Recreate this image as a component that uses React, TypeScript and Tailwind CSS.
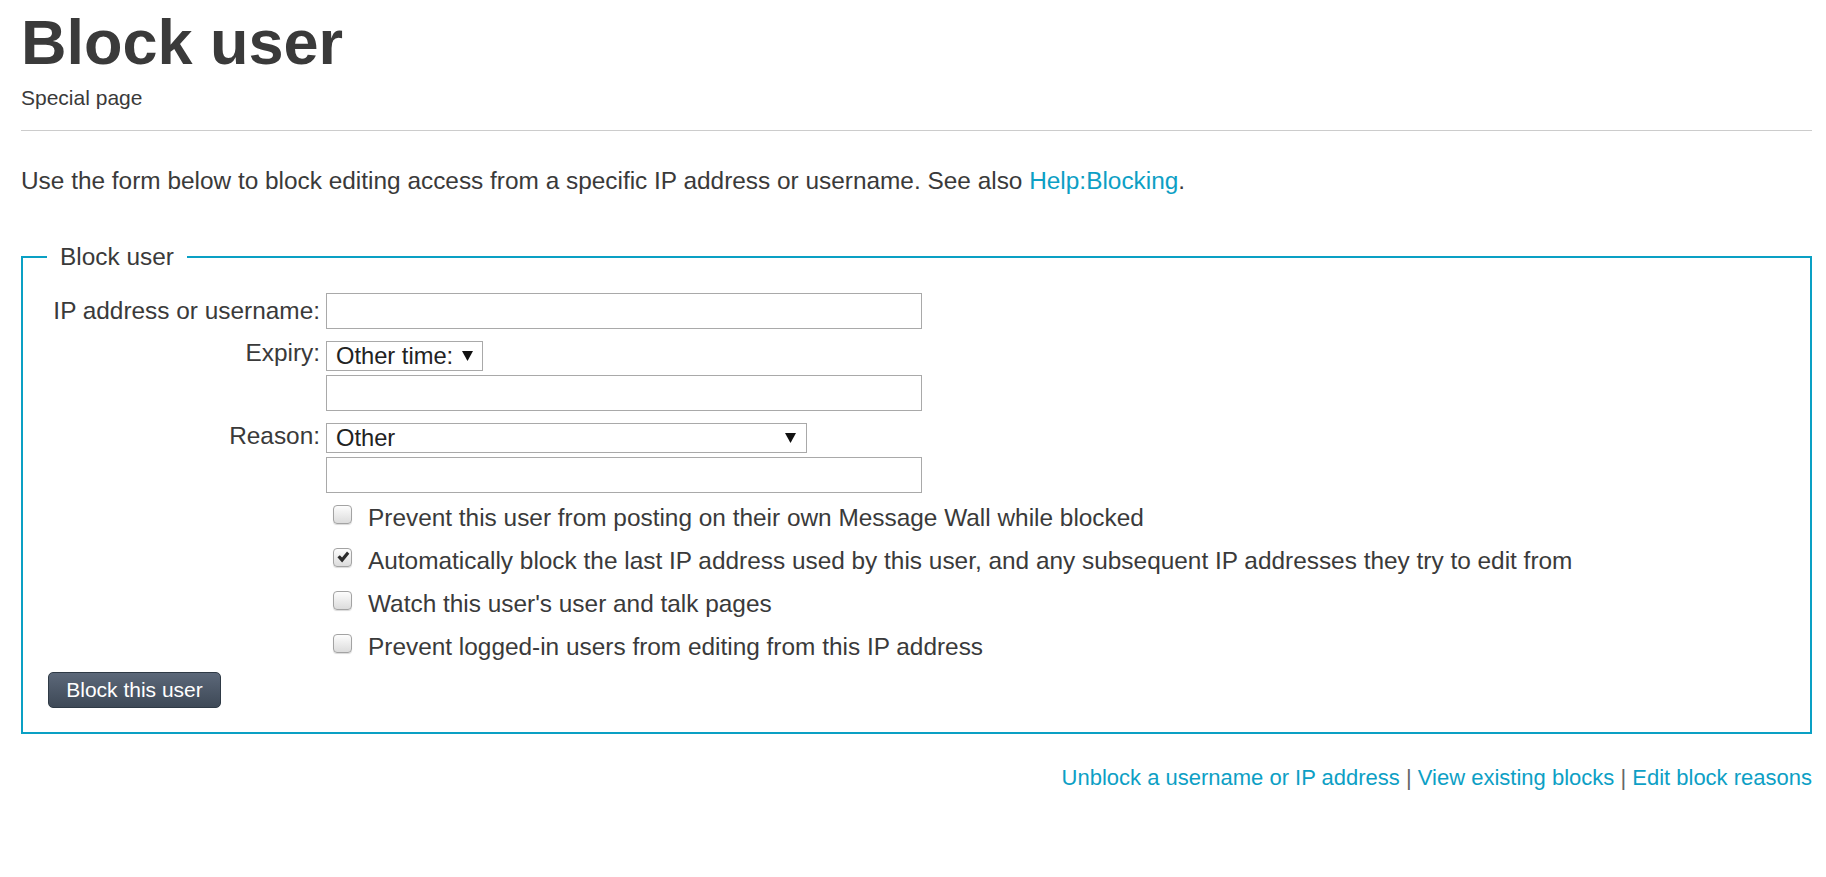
import React from "react";

function Box({ checked }: { checked?: boolean }) {
  return (
    <span className="mb-[9.2px] flex h-[19px] w-[19px] shrink-0 items-center justify-center rounded-[4px] border border-[#a3a3a3] bg-linear-to-b from-[#fdfdfd] to-[#dcdcdc] shadow-[0_1px_1px_rgba(0,0,0,0.15)]">
      {checked && (
        <svg width="14" height="14" viewBox="0 0 16 16">
          <path d="M1.6 8.4 L4.4 5.9 L6.9 8.7 L12.6 1.8 L15.2 4.2 L7 14.2 Z" fill="#2b2b2b" />
        </svg>
      )}
    </span>
  );
}

function Arrow() {
  return (
    <svg width="11" height="10" viewBox="0 0 11 10" className="shrink-0">
      <polygon points="0,0 11,0 5.5,10" fill="#111111" />
    </svg>
  );
}

function Input() {
  return <div className="h-[36px] w-[596px] border border-[#a9a9a9] bg-white" />;
}

const checks = [
  { t: "Prevent this user from posting on their own Message Wall while blocked", c: false },
  {
    t: "Automatically block the last IP address used by this user, and any subsequent IP addresses they try to edit from",
    c: true,
  },
  { t: "Watch this user's user and talk pages", c: false },
  { t: "Prevent logged-in users from editing from this IP address", c: false },
];

export default function App() {
  return (
    <div className="min-h-[877px] bg-white pl-[21px] pr-[14px] font-['Liberation_Sans',Arial,Helvetica,sans-serif] text-[#3a3a3a]">
      <h1 className="pt-[11px] text-[63px] font-bold leading-[63px]">Block user</h1>
      <div className="mt-[13px] text-[21px] leading-[21px]">Special page</div>
      <div className="mt-[22px] h-px bg-[#cccccc]" />
      <p className="mt-[38px] text-[24.4px] leading-[24.4px]">
        Use the form below to block editing access from a specific IP address or username. See also{" "}
        <a className="text-[#0d9fc5]">Help:Blocking</a>.
      </p>
      <fieldset className="mt-[48.6px] border-2 border-[#0aa0c4]">
        <legend className="ml-[24px] px-[13px] text-[24.4px] leading-[30px]">Block user</legend>
        <div className="pb-[24px] pl-[25px] pt-[21px] text-[24.4px] leading-[24.4px]">
          <div className="flex items-center gap-[6px]">
            <div className="w-[272px] text-right">IP address or username:</div>
            <Input />
          </div>
          <div className="mt-[12px] flex items-start gap-[6px]">
            <div className="w-[272px] text-right">Expiry:</div>
            <div className="flex flex-col gap-[4px]">
              <div className="flex h-[30px] w-[157px] items-center justify-between border border-[#a9a9a9] bg-white pl-[9px] pr-[9px] text-[23.7px] text-[#222]">
                <span>Other time:</span>
                <Arrow />
              </div>
              <Input />
            </div>
          </div>
          <div className="mt-[12px] flex items-start gap-[6px]">
            <div className="w-[272px] pt-[1px] text-right">Reason:</div>
            <div className="flex flex-col gap-[4px]">
              <div className="flex h-[30px] w-[481px] items-center justify-between border border-[#a9a9a9] bg-white pl-[9px] pr-[10px] text-[23.7px] text-[#222]">
                <span>Other</span>
                <Arrow />
              </div>
              <Input />
            </div>
          </div>
          <div className="mt-[4.1px] pl-[285px]">
            {checks.map((c) => (
              <div key={c.t} className="flex h-[43px] items-center">
                <Box checked={c.c} />
                <span className="ml-[16px]">{c.t}</span>
              </div>
            ))}
          </div>
          <button className="mt-[2.9px] h-[36px] w-[173px] rounded-[5px] border border-[#2f3a46] bg-linear-to-b from-[#5c6879] to-[#3e4957] text-[21px] leading-none text-white">
            Block this user
          </button>
        </div>
      </fieldset>
      <div className="mt-[33.4px] text-right text-[22px] leading-[22px]">
        <a className="text-[#0d9fc5]">Unblock a username or IP address</a>
        <span className="text-[#666]"> | </span>
        <a className="text-[#0d9fc5]">View existing blocks</a>
        <span className="text-[#666]"> | </span>
        <a className="text-[#0d9fc5]">Edit block reasons</a>
      </div>
    </div>
  );
}
